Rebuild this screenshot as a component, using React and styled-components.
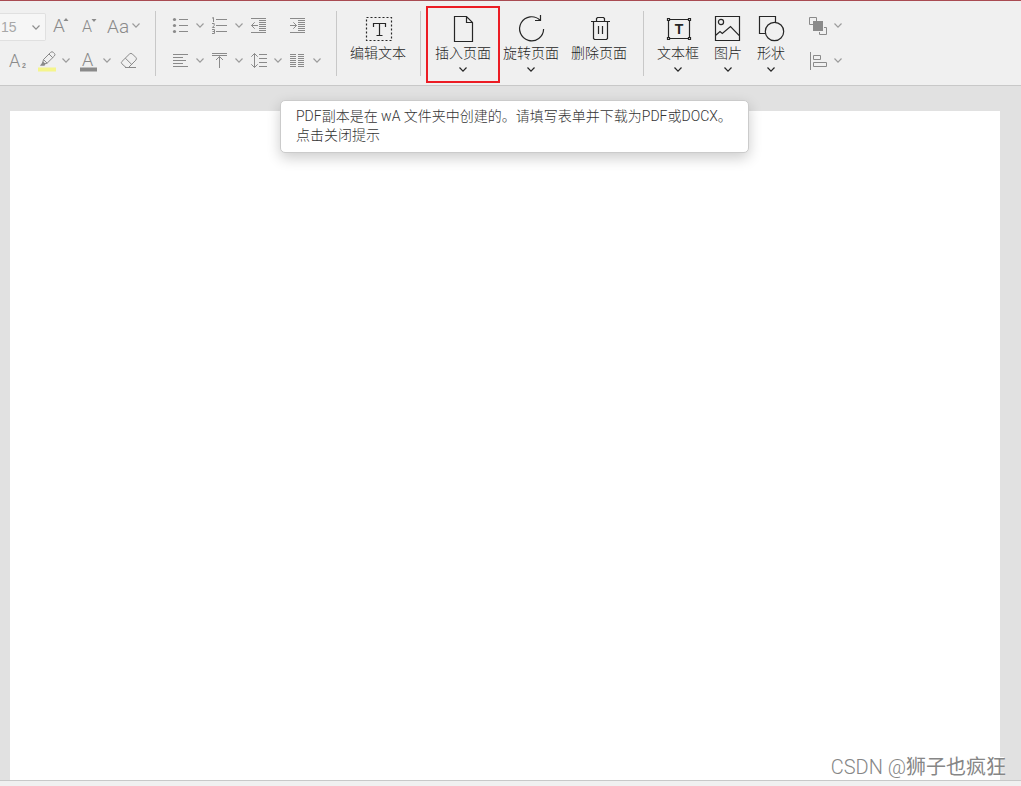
import React, { useState } from "react";
import styled, { createGlobalStyle } from "styled-components";

const GlobalStyle = createGlobalStyle`
  *, *::before, *::after { box-sizing: border-box; }
  body {
    margin: 0;
    background: #e1e1e1;
    color: #333;
    font-family: Roboto, "Noto Sans CJK SC", sans-serif;
    font-size: 14px;
    font-weight: 300;
  }
`;

const Screen = styled.div`
  position: relative;
  display: flex;
  flex-direction: column;
  min-height: 100vh;
`;

const Toolbar = styled.header`
  display: flex;
  flex: none;
  height: 86px;
  overflow: hidden;
  background: #f0f0f0;
  border-top: 1px solid #a94b52;
  border-bottom: 1px solid #c8c8c8;
`;

const Separator = styled.div`
  flex: none;
  width: 1px;
  height: 65px;
  margin-top: 10px;
  background: #c8c8c8;
`;

const ToolRows = styled.div`
  display: flex;
  flex: none;
  flex-direction: column;
  width: ${(p) => p.$width}px;
  padding-top: 7px;
  padding-left: ${(p) => p.$inset || 0}px;
`;

const ToolRow = styled.div`
  display: flex;
  align-items: center;
  height: 35px;
  gap: ${(p) => p.$gap || 0}px;
  padding-left: ${(p) => p.$inset || 0}px;
`;

const Split = styled.div`
  display: flex;
  flex: none;
  width: 39px;
`;

const PlainButton = styled.button`
  display: flex;
  flex: none;
  align-items: center;
  justify-content: center;
  padding: 0;
  border: 0;
  background: transparent;
  color: inherit;
  font: inherit;
  cursor: pointer;
`;

const IconButton = styled(PlainButton)`
  width: 27px;
  height: 27px;
  color: #8a8a8a;
`;

const MenuButton = styled(PlainButton)`
  width: 12px;
  height: 27px;
  color: #9c9c9c;
`;

const SizeField = styled.div`
  display: grid;
  flex: none;
  align-self: flex-end;
  align-items: center;
  width: 46px;
  height: 28px;
  margin-bottom: 2px;
  background: #f6f6f6;
  border: 1px solid #e0e0e0;
  border-left: 0;
  border-radius: 0 2px 2px 0;
  color: #8e8e8e;

  > * { grid-area: 1 / 1; }
  > svg { justify-self: end; margin-right: 5px; pointer-events: none; }
`;

const SizeSelect = styled.select`
  width: 100%;
  height: 100%;
  padding: 0 0 0 1px;
  border: 0;
  appearance: none;
  background: transparent;
  color: #a8a8a8;
  font-family: "Liberation Sans", sans-serif;
  font-size: 14px;
`;

const LargeGroup = styled.div`
  display: flex;
  flex: none;
  align-items: flex-start;
  gap: ${(p) => p.$gap || 0}px;
  padding: 8px ${(p) => p.$end || 0}px 0 ${(p) => p.$start}px;
`;

const LargeButton = styled(PlainButton)`
  flex-direction: column;
  justify-content: flex-start;
  height: 71px;
  padding: 6px 6px 0;
  color: #262626;
  white-space: nowrap;
  outline: ${(p) => (p.$marked ? "2px solid #ec1c24" : "none")};
  outline-offset: 1px;
`;

const LargeLabel = styled.span`
  margin-bottom: 4px;
  line-height: 20px;
`;

const Drawing = styled.svg`
  display: block;
  flex: none;
  overflow: visible;
  fill: none;
  stroke: currentColor;

  .solid { fill: currentColor; stroke: none; }
  text {
    fill: currentColor;
    stroke: none;
    font-family: Roboto, sans-serif;
    font-weight: 300;
  }
  text.heavy {
    font-family: "Liberation Sans", sans-serif;
    font-weight: 700;
  }
`;

const Workspace = styled.main`
  display: flex;
  flex: 1;
  padding: 25px 21px 0 10px;
  background: #e1e1e1;
`;

const Page = styled.section`
  flex: 1;
  background: #fff;
`;

const StatusBar = styled.footer`
  flex: none;
  height: 6px;
  background: #f0f0f0;
  border-top: 1px solid #c8c8c8;
`;

const Notice = styled.button`
  position: absolute;
  top: 100px;
  left: 280px;
  width: 469px;
  padding: 6px 15px 7px;
  border: 1px solid #cbcbcb;
  border-radius: 5px;
  background: #fff;
  box-shadow: 0 5px 14px rgba(0, 0, 0, 0.2);
  color: #333;
  font: inherit;
  line-height: 19px;
  text-align: left;
  white-space: nowrap;
  cursor: pointer;

  span { display: block; }
`;

const Watermark = styled.div`
  position: absolute;
  right: 15px;
  bottom: 7px;
  color: #868686;
  font-size: 20px;
  font-weight: 400;
  line-height: 24px;
  text-shadow: -1px -1px 0 #fff;
  white-space: nowrap;
`;

const WatermarkSite = styled.span`
  font-weight: 300;
`;

const Small = ({ children }) => (
  <Drawing width="19" height="19" viewBox="0 0 19 19" aria-hidden="true">{children}</Drawing>
);

const Large = ({ children }) => (
  <Drawing width="28" height="28" viewBox="0 0 28 28" strokeWidth="1.2" aria-hidden="true">{children}</Drawing>
);

const Chevron = () => (
  <Drawing width="8" height="5" viewBox="0 0 8 5" strokeWidth="1.2" aria-hidden="true">
    <path d="M.5 .5 4 4.2 7.5 .5" />
  </Drawing>
);

const icons = {
  grow: <Small><text x="2" y="16" fontSize="19">A</text><path className="solid" d="M12.5 5h5L15 2z" /></Small>,
  shrink: <Small><text x="3" y="16" fontSize="16">A</text><path className="solid" d="M12.5 3h5L15 6z" /></Small>,
  letterCase: <Small><text x="0" y="17" fontSize="19">Aa</text></Small>,
  subscript: <Small><text x="1" y="16" fontSize="18">A</text><text className="heavy" x="14" y="17" fontSize="7">2</text></Small>,
  highlight: (
    <Small>
      <path d="M6.5 8.5 13.6 1.4a2 2 0 0 1 2.8 0l.9.9a2 2 0 0 1 0 2.8l-7.2 7.1zM12 3l3.8 3.8M6.5 8.5l-.8 3.2 1.4 1.3 3-.8" />
      <path className="solid" d="m6 10.5-3 4.3h4.5l1-2z" />
      <path d="M1 18.5h18" stroke="#f5f58c" strokeWidth="4" />
    </Small>
  ),
  fontColor: <Small><text x="4" y="15" fontSize="18">A</text><path d="M2 18.5h17" strokeWidth="4" /></Small>,
  eraser: <Small><path d="M7 16.5 2.9 12.8a1.6 1.6 0 0 1 0-2.3l7.5-7.4a2.2 2.2 0 0 1 3.1 0l3.3 3.3a2 2 0 0 1 0 2.8L9.5 16.5zM6.4 7.2l6.2 6.2M6 16.5h11" /></Small>,
  bullets: <Small><path d="M8 3.5h9M8 9.5h9M8 15.5h9" /><g className="solid"><circle cx="3.5" cy="3.5" r="1.6" /><circle cx="3.5" cy="9.5" r="1.6" /><circle cx="3.5" cy="15.5" r="1.6" /></g></Small>,
  numbers: (
    <Small>
      <path d="M6 3.5h11M6 9.5h11M6 15.5h11" />
      <path d="M2 2.2 3.5 1.5v4.5M2 7.5h2.2v2L2.4 11.5h2.3M2 13.5h2.5v4H2M2.5 15.5h2" />
    </Small>
  ),
  outdent: <Small><path d="M2 2.5h15M2 16.5h15M10 4.5h7M10 6.5h7M10 8.5h7M10 10.5h7M10 12.5h7M10 14.5h7M9 9.5H2.5M5.7 6.3 2.5 9.5l3.2 3.2" /></Small>,
  indent: <Small><path d="M2 2.5h15M2 16.5h15M10 4.5h7M10 6.5h7M10 8.5h7M10 10.5h7M10 12.5h7M10 14.5h7M2 9.5h6.5M5.3 6.3l3.2 3.2-3.2 3.2" /></Small>,
  alignLeft: <Small><path d="M2 3.5h15M2 6.5h10M2 9.5h13M2 12.5h10M2 15.5h15" /></Small>,
  alignTop: <Small><path d="M2 2.5h15M2 4.5h15M9.5 17V5.5M6 9l3.5-3.5L13 9" /></Small>,
  lineSpacing: <Small><path d="M10 3.5h8M10 7.5h8M10 11.5h8M10 15.5h8M5.5 2.5v14M2.3 5.7l3.2-3.2 3.2 3.2M2.3 13.3l3.2 3.2 3.2-3.2" /></Small>,
  columns: <Small><path d="M2 3.5h6m2 0h6M2 5.5h6m2 0h6M2 7.5h6m2 0h6M2 9.5h6m2 0h6M2 11.5h6m2 0h6M2 13.5h6m2 0h6M2 15.5h6m2 0h6" /></Small>,
  arrange: <Small><path d="M4 8.5H.5v-7h7V5M15 11.5h2.5v7h-7V16" /><path className="solid" d="M4 5h10v10H4z" /></Small>,
  alignObjects: <Small><path d="M1.5 1v18M4.5 4.5h7v4h-7zM4.5 11.5h13v4h-13z" /></Small>,
  editText: <Large><path d="M2.5 2.5h25v23h-25z" strokeDasharray="2 2" /><path d="M9.5 12V8.5h12V12M15.5 8.5v12M12.5 20.5h6" /></Large>,
  page: <Large><path d="M5.5 1.5h12l6 6v19h-18zM17.5 1.5v6h6" /></Large>,
  rotate: <Large><path d="M26.6 14A12 12 0 1 1 23 5.2M23.5 0v5.5H18" /></Large>,
  trash: <Large><path d="M6 6.5h19M11.5 6.5v-3l1-1h6l1 1v3M8.5 6.5v17l1 1h12l1-1v-17M13.5 11v8M17.5 11v8" /></Large>,
  textBox: (
    <Large>
      <path d="M4.5 4.5h21v19h-21z" />
      <g fill="#f0f0f0"><path d="M3.5 3.5h2v2h-2zM24.5 3.5h2v2h-2zM3.5 22.5h2v2h-2zM24.5 22.5h2v2h-2z" /></g>
      <text className="heavy" x="15" y="19" fontSize="14" textAnchor="middle">T</text>
    </Large>
  ),
  picture: <Large><path d="M1.5 1.5h24v24h-24zM1.5 20.5 6 16.5l2.3 2 8.2-7 9 9.3" /><circle cx="7" cy="7" r="2.6" /></Large>,
  shapes: <Large><path d="M8.5 18.5h-6v-17h16v6" /><circle cx="17.5" cy="16.5" r="9.2" /></Large>,
};

const Tool = ({ icon, label }) => (
  <IconButton type="button" aria-label={label}>{icons[icon]}</IconButton>
);

const SplitTool = ({ icon, label, menu = true }) => (
  <Split>
    <Tool icon={icon} label={label} />
    {menu && <MenuButton type="button" aria-label={`${label}选项`}><Chevron /></MenuButton>}
  </Split>
);

const LargeTool = ({ icon, label, menu = true, marked }) => (
  <LargeButton type="button" $marked={marked}>
    {icons[icon]}
    <LargeLabel>{label}</LargeLabel>
    {menu && <Chevron />}
  </LargeButton>
);

export default function App() {
  const [noticeOpen, setNoticeOpen] = useState(true);

  return (
    <Screen>
      <GlobalStyle />
      <Toolbar>
        <ToolRows $width={155}>
          <ToolRow $gap={1}>
            <SizeField>
              <SizeSelect aria-label="字号" defaultValue="15">
                <option>12</option>
                <option>15</option>
                <option>18</option>
              </SizeSelect>
              <Chevron />
            </SizeField>
            <Tool icon="grow" label="增大字号" />
            <Tool icon="shrink" label="减小字号" />
            <SplitTool icon="letterCase" label="更改大小写" />
          </ToolRow>
          <ToolRow $gap={2} $inset={4}>
            <Tool icon="subscript" label="下标" />
            <SplitTool icon="highlight" label="突出显示" />
            <SplitTool icon="fontColor" label="字体颜色" />
            <Tool icon="eraser" label="清除格式" />
          </ToolRow>
        </ToolRows>
        <Separator />
        <ToolRows $width={180} $inset={11}>
          <ToolRow>
            <SplitTool icon="bullets" label="项目符号" />
            <SplitTool icon="numbers" label="编号" />
            <SplitTool icon="outdent" label="减少缩进" menu={false} />
            <SplitTool icon="indent" label="增加缩进" menu={false} />
          </ToolRow>
          <ToolRow>
            <SplitTool icon="alignLeft" label="对齐" />
            <SplitTool icon="alignTop" label="垂直对齐" />
            <SplitTool icon="lineSpacing" label="行距" />
            <SplitTool icon="columns" label="分栏" />
          </ToolRow>
        </ToolRows>
        <Separator />
        <LargeGroup $start={7} $end={8}>
          <LargeTool icon="editText" label="编辑文本" menu={false} />
        </LargeGroup>
        <Separator />
        <LargeGroup $start={8} $end={10}>
          <LargeTool icon="page" label="插入页面" marked />
          <LargeTool icon="rotate" label="旋转页面" />
          <LargeTool icon="trash" label="删除页面" menu={false} />
        </LargeGroup>
        <Separator />
        <LargeGroup $start={7} $end={14} $gap={3}>
          <LargeTool icon="textBox" label="文本框" />
          <LargeTool icon="picture" label="图片" />
          <LargeTool icon="shapes" label="形状" />
        </LargeGroup>
        <ToolRows $width={39}>
          <ToolRow><SplitTool icon="arrange" label="排列" /></ToolRow>
          <ToolRow><SplitTool icon="alignObjects" label="对齐对象" /></ToolRow>
        </ToolRows>
      </Toolbar>
      <Workspace>
        <Page aria-label="文档页面" />
      </Workspace>
      <StatusBar />
      {noticeOpen && (
        <Notice type="button" onClick={() => setNoticeOpen(false)}>
          <span>PDF副本是在 wA 文件夹中创建的。请填写表单并下载为PDF或DOCX。</span>
          <span>点击关闭提示</span>
        </Notice>
      )}
      <Watermark><WatermarkSite>CSDN @</WatermarkSite>狮子也疯狂</Watermark>
    </Screen>
  );
}
